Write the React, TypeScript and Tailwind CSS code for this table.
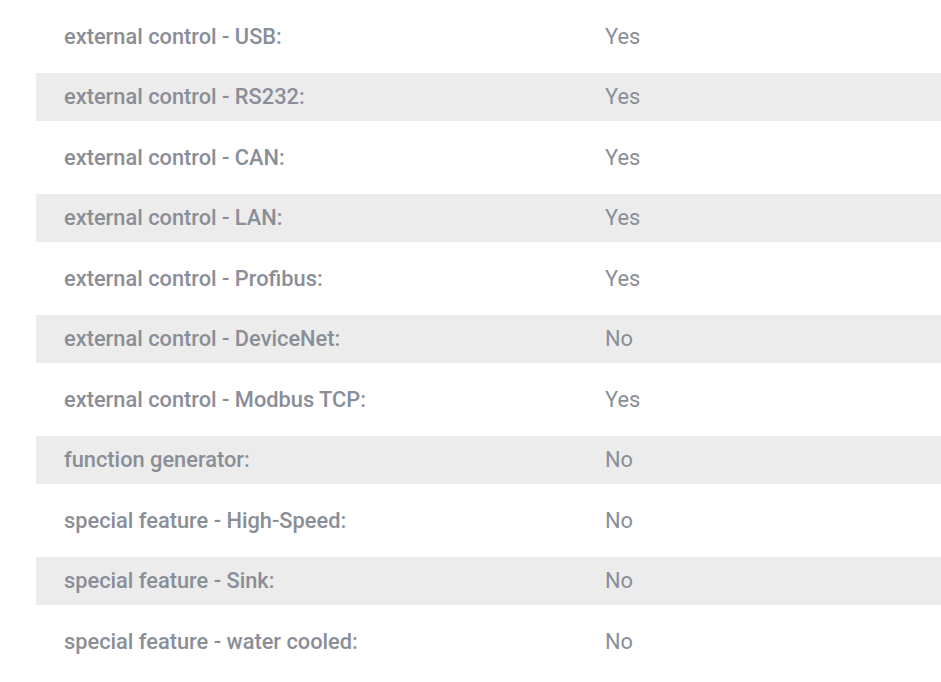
import React from "react";

const rows: [string, string][] = [
  ["external control - USB:", "Yes"],
  ["external control - RS232:", "Yes"],
  ["external control - CAN:", "Yes"],
  ["external control - LAN:", "Yes"],
  ["external control - Profibus:", "Yes"],
  ["external control - DeviceNet:", "No"],
  ["external control - Modbus TCP:", "Yes"],
  ["function generator:", "No"],
  ["special feature - High-Speed:", "No"],
  ["special feature - Sink:", "No"],
  ["special feature - water cooled:", "No"],
];

export default function App() {
  return (
    <div
      className="w-[941px] h-[682px] bg-white overflow-hidden pl-[36px] pt-[12px] text-[#8a8e97] text-[21.8px]"
      style={{ fontFamily: "Roboto, 'Noto Sans', sans-serif" }}
    >
      <div className="flex flex-col gap-[12.5px]">
        {rows.map(([k, v], i) => (
          <div
            key={i}
            className={`flex items-center h-[48px] pt-[2px] ${i % 2 === 1 ? "bg-[#ececec]" : "bg-white"}`}
          >
            <div className="w-[569px] pl-[28px] font-medium">{k}</div>
            <div className="font-normal">{v}</div>
          </div>
        ))}
      </div>
    </div>
  );
}
